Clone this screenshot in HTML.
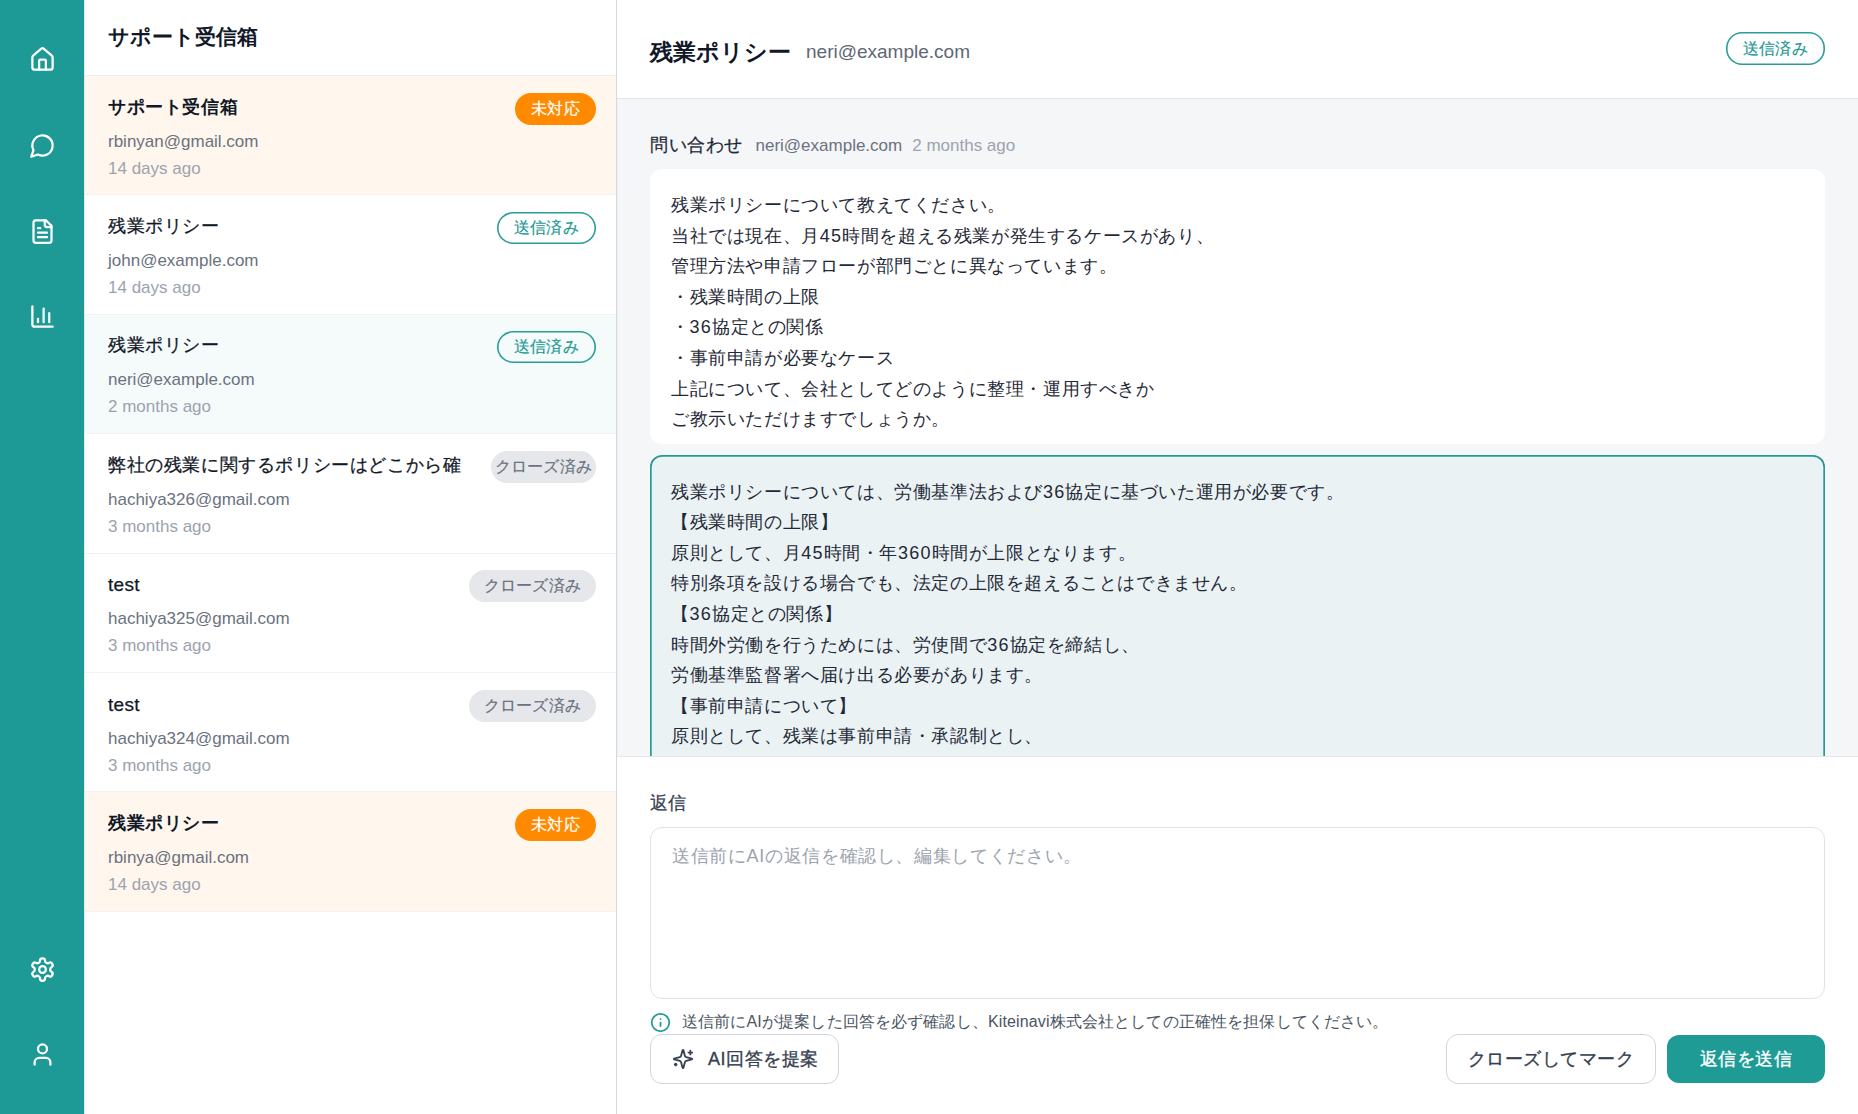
<!DOCTYPE html>
<html lang="ja">
<head>
<meta charset="utf-8">
<style>
*{box-sizing:border-box;margin:0;padding:0}
html,body{width:1858px;height:1114px;overflow:hidden;background:#fff}
body{font-family:"Liberation Sans",sans-serif;color:#111827;position:relative}
.side{position:absolute;left:0;top:0;width:84px;height:1114px;background:#1e9a96}
.side svg{position:absolute;left:28.5px;width:27px;height:27px;fill:none;stroke:#fff;stroke-width:2;stroke-linecap:round;stroke-linejoin:round}
.list{position:absolute;left:84px;top:0;width:533px;height:1114px;background:#fff;border-left:1px solid #e5e7eb;border-right:1px solid #d5d9de}
.lh{position:absolute;left:0;top:0;width:531px;height:76px;border-bottom:1px solid #eceef1}
.lh h1{position:absolute;left:23px;top:22px;font-size:21px;font-weight:700;line-height:30px;color:#111827}
.item{position:absolute;left:0;width:531px;height:119.4px;border-bottom:1px solid #f0f2f5}
.item.unread{background:#fff6ed}
.item.sel{background:#f5fafa}
.it{position:absolute;left:23px;top:17.5px;font-size:18px;letter-spacing:0.6px;-webkit-text-stroke:0.25px currentColor;line-height:27px;color:#111827;white-space:nowrap;overflow:hidden}
.unread .it{font-weight:700;-webkit-text-stroke:0}
.em{position:absolute;left:23px;top:53.5px;font-size:17px;line-height:24px;color:#6b7280;white-space:nowrap}
.dt{position:absolute;left:23px;top:80.5px;font-size:17px;line-height:24px;color:#9ca3af;white-space:nowrap}
.bd{position:absolute;top:16.5px;height:32px;border-radius:16px;font-size:16px;line-height:32px;text-align:center;white-space:nowrap;letter-spacing:0.3px;-webkit-text-stroke:0.2px currentColor}
.b-or{background:#ff8a00;color:#fff}
.b-tl{box-shadow:inset 0 0 0 1.6px #2a9d96;color:#1f9a94;background:transparent}
.b-gr{background:#e5e7eb;color:#6b7280}
.main{position:absolute;left:617px;top:0;width:1241px;height:1114px;background:#fff}
.mh{position:absolute;left:0;top:0;width:1241px;height:99px;border-bottom:1px solid #e5e7eb;background:#fff}
.mh .t{position:absolute;left:33px;top:37px;font-size:23px;font-weight:700;line-height:30px;color:#111827}
.mh .e{position:absolute;left:189px;top:38.5px;font-size:19px;line-height:26px;color:#5f6774}
.msgs{position:absolute;left:0;top:99px;width:1241px;height:657px;background:#f5f6f8;overflow:hidden;box-shadow:inset 1px 0 0 #eef0f2}
.ml{position:absolute;left:33px;top:32px;white-space:nowrap;line-height:28px}
.ml b{font-size:18px;font-weight:500;color:#1f2937;letter-spacing:0.5px;-webkit-text-stroke:0.25px currentColor}
.ml span{font-size:17px;color:#6b7280;margin-left:13px}
.ml span.g{color:#9ca3af;margin-left:10px}
.card{position:absolute;left:33px;width:1175px;border-radius:12px;font-size:18px;line-height:30.6px;color:#1f2937;white-space:pre;letter-spacing:0.6px}
.card i{font-style:normal;letter-spacing:1.2px}
.c1{top:70px;height:274.5px;background:#fff;padding:21px 21px 0}
.c2{top:356px;height:400px;background:#eaf2f4;box-shadow:inset 0 0 0 1.7px #259a94;border-radius:12px;padding:21.6px 21px 0}
.reply{position:absolute;left:0;top:756px;width:1241px;height:358px;border-top:1px solid #e5e7eb;background:#fff}
.rl{position:absolute;left:33px;top:33px;font-size:18px;font-weight:500;line-height:26px;color:#374151;-webkit-text-stroke:0.25px currentColor}
.ta{position:absolute;left:33px;top:70px;width:1175px;height:172px;border:1px solid #dfe3e8;border-radius:12px}
.ta span{position:absolute;left:21px;top:14px;font-size:18px;line-height:28px;color:#9ca3af;letter-spacing:0.65px}
.info{position:absolute;left:33px;top:252.5px;white-space:nowrap}
.info svg{position:absolute;left:0;top:2px;width:21px;height:21px;fill:none;stroke:#1f9a94;stroke-width:2;stroke-linecap:round}
.info span{position:absolute;left:32px;top:0;font-size:16px;line-height:24px;color:#4b5563;letter-spacing:0.14px}
.btn{position:absolute;border-radius:12px;font-size:18px;font-weight:500;line-height:48px;text-align:center;white-space:nowrap;letter-spacing:0.5px;-webkit-text-stroke:0.35px currentColor}
.b1{left:33px;top:276.5px;width:189px;height:50px;border:1px solid #d1d5db;color:#374151}
.b2{left:829px;top:276.5px;width:210px;height:50px;border:1px solid #d1d5db;color:#374151}
.b3{left:1050px;top:278px;width:158px;height:48px;background:#1f9b95;color:#fff;line-height:48px}
</style>
</head>
<body>
<div class="side">
  <svg style="top:45.5px" viewBox="0 0 24 24"><path d="M15 21v-8a1 1 0 0 0-1-1h-4a1 1 0 0 0-1 1v8"/><path d="M3 10a2 2 0 0 1 .709-1.528l7-5.999a2 2 0 0 1 2.582 0l7 5.999A2 2 0 0 1 21 10v9a2 2 0 0 1-2 2H5a2 2 0 0 1-2-2z"/></svg>
  <svg style="top:131.5px" viewBox="0 0 24 24"><path d="M7.9 20A9 9 0 1 0 4 16.1L2 22Z"/></svg>
  <svg style="top:217.5px" viewBox="0 0 24 24"><path d="M15 2H6a2 2 0 0 0-2 2v16a2 2 0 0 0 2 2h12a2 2 0 0 0 2-2V7Z"/><path d="M14 2v4a2 2 0 0 0 2 2h4"/><path d="M10 9H8"/><path d="M16 13H8"/><path d="M16 17H8"/></svg>
  <svg style="top:303px" viewBox="0 0 24 24"><path d="M3 3v16a2 2 0 0 0 2 2h16"/><path d="M18 17V9"/><path d="M13 17V5"/><path d="M8 17v-3"/></svg>
  <svg style="top:956px" viewBox="0 0 24 24"><path d="M12.22 2h-.44a2 2 0 0 0-2 2v.18a2 2 0 0 1-1 1.73l-.43.25a2 2 0 0 1-2 0l-.15-.08a2 2 0 0 0-2.73.73l-.22.38a2 2 0 0 0 .73 2.73l.15.1a2 2 0 0 1 1 1.72v.51a2 2 0 0 1-1 1.74l-.15.09a2 2 0 0 0-.73 2.73l.22.38a2 2 0 0 0 2.730.73l.15-.08a2 2 0 0 1 2 0l.43.25a2 2 0 0 1 1 1.73V20a2 2 0 0 0 2 2h.44a2 2 0 0 0 2-2v-.18a2 2 0 0 1 1-1.73l.43-.25a2 2 0 0 1 2 0l.15.08a2 2 0 0 0 2.73-.73l.22-.39a2 2 0 0 0-.73-2.73l-.15-.08a2 2 0 0 1-1-1.74v-.5a2 2 0 0 1 1-1.74l.15-.09a2 2 0 0 0 .73-2.73l-.22-.38a2 2 0 0 0-2.73-.73l-.15.08a2 2 0 0 1-2 0l-.43-.25a2 2 0 0 1-1-1.73V4a2 2 0 0 0-2-2z"/><circle cx="12" cy="12" r="3"/></svg>
  <svg style="top:1041px" viewBox="0 0 24 24"><path d="M19 21v-2a4 4 0 0 0-4-4H9a4 4 0 0 0-4 4v2"/><circle cx="12" cy="7" r="4"/></svg>
</div>

<div class="list">
  <div class="lh"><h1>サポート受信箱</h1></div>
  <div class="item unread" style="top:76px">
    <div class="it">サポート受信箱</div><div class="em">rbinyan@gmail.com</div><div class="dt">14 days ago</div>
    <div class="bd b-or" style="left:430px;width:81px">未対応</div>
  </div>
  <div class="item" style="top:195.4px">
    <div class="it">残業ポリシー</div><div class="em">john@example.com</div><div class="dt">14 days ago</div>
    <div class="bd b-tl" style="left:412px;width:99px">送信済み</div>
  </div>
  <div class="item sel" style="top:314.8px">
    <div class="it">残業ポリシー</div><div class="em">neri@example.com</div><div class="dt">2 months ago</div>
    <div class="bd b-tl" style="left:412px;width:99px">送信済み</div>
  </div>
  <div class="item" style="top:434.2px">
    <div class="it" style="width:360px">弊社の残業に関するポリシーはどこから確</div><div class="em">hachiya326@gmail.com</div><div class="dt">3 months ago</div>
    <div class="bd b-gr" style="left:406px;width:105px">クローズ済み</div>
  </div>
  <div class="item" style="top:553.6px">
    <div class="it" style="font-size:19px;letter-spacing:0.3px">test</div><div class="em">hachiya325@gmail.com</div><div class="dt">3 months ago</div>
    <div class="bd b-gr" style="left:384px;width:127px">クローズ済み</div>
  </div>
  <div class="item" style="top:673px">
    <div class="it" style="font-size:19px;letter-spacing:0.3px">test</div><div class="em">hachiya324@gmail.com</div><div class="dt">3 months ago</div>
    <div class="bd b-gr" style="left:384px;width:127px">クローズ済み</div>
  </div>
  <div class="item unread" style="top:792.4px">
    <div class="it">残業ポリシー</div><div class="em">rbinya@gmail.com</div><div class="dt">14 days ago</div>
    <div class="bd b-or" style="left:430px;width:81px">未対応</div>
  </div>
</div>

<div class="main">
  <div class="mh">
    <div class="t">残業ポリシー</div>
    <div class="e">neri@example.com</div>
    <div class="bd b-tl" style="left:1109px;top:32px;width:99px;height:33px;line-height:33px">送信済み</div>
  </div>
  <div class="msgs">
    <div class="ml"><b>問い合わせ</b><span>neri@example.com</span><span class="g">2 months ago</span></div>
    <div class="card c1">残業ポリシーについて教えてください。
当社では現在、月<i>45</i>時間を超える残業が発生するケースがあり、
管理方法や申請フローが部門ごとに異なっています。
・残業時間の上限
・<i>36</i>協定との関係
・事前申請が必要なケース
上記について、会社としてどのように整理・運用すべきか
ご教示いただけますでしょうか。</div>
    <div class="card c2">残業ポリシーについては、労働基準法および<i>36</i>協定に基づいた運用が必要です。
【残業時間の上限】
原則として、月<i>45</i>時間・年<i>360</i>時間が上限となります。
特別条項を設ける場合でも、法定の上限を超えることはできません。
【<i>36</i>協定との関係】
時間外労働を行うためには、労使間で<i>36</i>協定を締結し、
労働基準監督署へ届け出る必要があります。
【事前申請について】
原則として、残業は事前申請・承認制とし、
緊急時は事後報告を認める運用が一般的です。</div>
  </div>
  <div class="reply">
    <div class="rl">返信</div>
    <div class="ta"><span>送信前にAIの返信を確認し、編集してください。</span></div>
    <div class="info"><svg viewBox="0 0 24 24"><circle cx="12" cy="12" r="10"/><path d="M12 16v-4"/><path d="M12 8h.01"/></svg><span>送信前にAIが提案した回答を必ず確認し、Kiteinavi株式会社としての正確性を担保してください。</span></div>
    <div class="btn b1"><svg style="position:absolute;left:21px;top:13px;width:22px;height:22px;fill:none;stroke:#374151;stroke-width:2;stroke-linecap:round;stroke-linejoin:round" viewBox="0 0 24 24"><path d="M9.937 15.5A2 2 0 0 0 8.5 14.063l-6.135-1.582a.5.5 0 0 1 0-.962L8.5 9.936A2 2 0 0 0 9.937 8.5l1.582-6.135a.5.5 0 0 1 .963 0L14.063 8.5A2 2 0 0 0 15.5 9.937l6.135 1.581a.5.5 0 0 1 0 .964L15.5 14.063a2 2 0 0 0-1.437 1.437l-1.582 6.135a.5.5 0 0 1-.963 0z"/><path d="M20 3v4"/><path d="M22 5h-4"/><path d="M4 17v2"/><path d="M5 18H3"/></svg><span style="position:absolute;left:57px;top:0">AI回答を提案</span></div>
    <div class="btn b2">クローズしてマーク</div>
    <div class="btn b3">返信を送信</div>
  </div>
</div>
</body>
</html>
